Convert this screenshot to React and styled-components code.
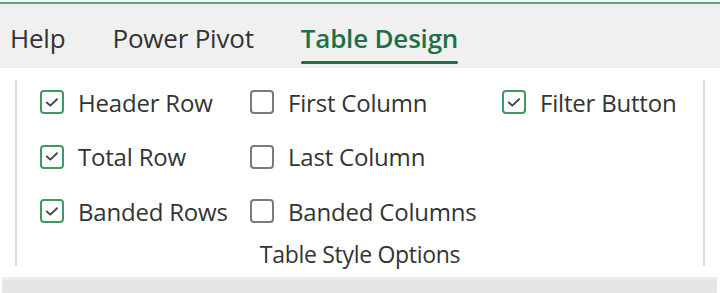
import React from "react";
import styled, { createGlobalStyle } from "styled-components";

const Global = createGlobalStyle`
  html, body { margin: 0; padding: 0; background: #ffffff; }
  body { font-family: "Open Sans", "Noto Sans", sans-serif; color: #2b2b2b; }
  #root { width: 720px; height: 293px; overflow: hidden; }
`;

const Frame = styled.div`
  display: flex;
  flex-direction: column;
  height: 293px;
  padding-top: 2px;
  box-sizing: border-box;
`;

const TabBar = styled.div`
  display: flex;
  align-items: flex-end;
  height: 66px;
  flex: none;
  box-sizing: border-box;
  background: #f0f0f0;
  border-top: 2px solid #64a47c;
  padding-left: 10px;
  gap: 47px;
`;

const Tab = styled.div`
  position: relative;
  font-size: 26px;
  line-height: 32px;
  padding-bottom: 14px;
  letter-spacing: -0.2px;
  color: ${(p) => (p.$active ? "#1e7145" : "#333333")};
  font-weight: ${(p) => (p.$active ? 600 : 400)};
  white-space: nowrap;
  &::after {
    content: "";
    display: ${(p) => (p.$active ? "block" : "none")};
    position: absolute;
    left: 0;
    right: 0;
    bottom: 4px;
    height: 3px;
    border-radius: 2px;
    background: #1e7145;
  }
`;

const Panel = styled.div`
  flex: 1;
  min-height: 0;
  display: flex;
  padding-top: 12px;
  padding-bottom: 11px;
`;

const Group = styled.div`
  margin-left: 15px;
  width: 690px;
  box-sizing: border-box;
  border-left: 2px solid #dadada;
  border-right: 2px solid #dadada;
  display: flex;
  flex-direction: column;
  padding-top: 7px;
`;

const Options = styled.div`
  display: grid;
  grid-template-columns: 210px 252px 1fr;
  grid-auto-rows: 30px;
  row-gap: 24.5px;
  padding-left: 23px;
`;

const Option = styled.label`
  display: flex;
  align-items: center;
  gap: 14px;
  font-size: 24px;
  letter-spacing: -0.2px;
  color: #333333;
  white-space: nowrap;
  grid-column: ${(p) => p.$col};
  grid-row: ${(p) => p.$row};
`;

const Box = styled.span`
  width: 24px;
  height: 24px;
  flex: none;
  border: 2px solid ${(p) => (p.$checked ? "#3e9a62" : "#7a7a7a")};
  border-radius: 4px;
  display: flex;
  align-items: center;
  justify-content: center;
  box-sizing: border-box;
  background: #fff;
`;

const GroupLabel = styled.div`
  margin-top: 16px;
  text-align: center;
  font-size: 23px;
  letter-spacing: -0.3px;
  color: #333333;
  line-height: 24px;
`;

const Footer = styled.div`
  height: 15px;
  flex: none;
  margin: 0 3px 0 2px;
  background: linear-gradient(#f2f2f2 0, #e4e4e4 3px, #e6e6e6 100%);
  border-top: 1px solid #ececec;
`;

const Check = () => (
  <svg width="14" height="11" viewBox="0 0 14 11">
    <path d="M1.8 5.5 L5.3 8.6 L12 2.2" fill="none" stroke="#444" strokeWidth="1.9" strokeLinecap="round" strokeLinejoin="round" />
  </svg>
);

const options = [
  { label: "Header Row", checked: true, col: 1, row: 1 },
  { label: "Total Row", checked: true, col: 1, row: 2 },
  { label: "Banded Rows", checked: true, col: 1, row: 3 },
  { label: "First Column", checked: false, col: 2, row: 1 },
  { label: "Last Column", checked: false, col: 2, row: 2 },
  { label: "Banded Columns", checked: false, col: 2, row: 3 },
  { label: "Filter Button", checked: true, col: 3, row: 1 },
];

export default function App() {
  return (
    <>
      <Global />
      <Frame>
        <TabBar>
          <Tab>Help</Tab>
          <Tab>Power Pivot</Tab>
          <Tab $active>Table Design</Tab>
        </TabBar>
        <Panel>
          <Group>
            <Options>
              {options.map((o) => (
                <Option key={o.label} $col={o.col} $row={o.row}>
                  <Box $checked={o.checked}>{o.checked && <Check />}</Box>
                  {o.label}
                </Option>
              ))}
            </Options>
            <GroupLabel>Table Style Options</GroupLabel>
          </Group>
        </Panel>
        <Footer />
      </Frame>
    </>
  );
}
